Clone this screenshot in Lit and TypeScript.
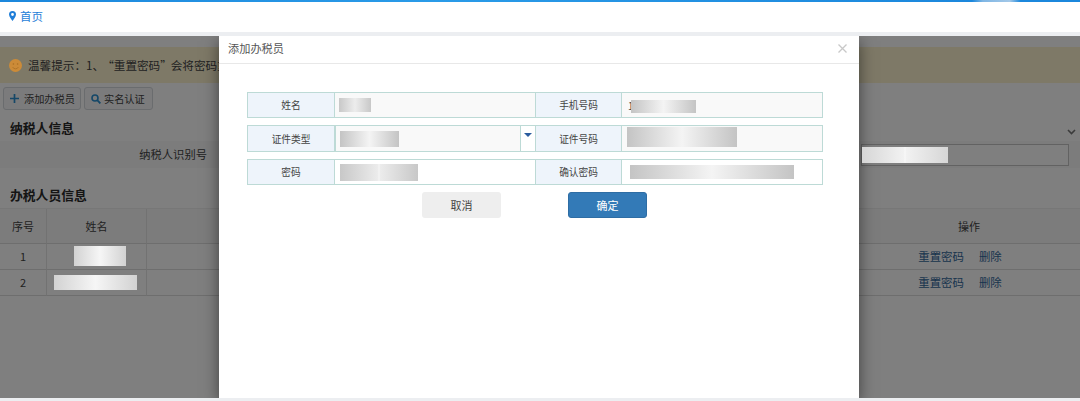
import { LitElement, html, css } from "lit";
import { customElement } from "lit/decorators.js";

@customElement("app-root")
export class AppRoot extends LitElement {
  static styles = css`
    :host { display: block; width: 1080px; height: 401px; overflow: hidden; background: #fff; color: #333; font-family: "Noto Sans CJK SC", "Noto Sans", sans-serif; }
    * { box-sizing: border-box; }
    .page { display: flex; flex-direction: column; height: 401px; }
    .topline { height: 2px; flex: none; background: linear-gradient(90deg, #1b87dc 0, #2a9be8 40%, #1b87dc 90%, #7fb6e4 91%, #a3c8e8 93.5%, #1b87dc 94.5%, #1b87dc 100%); }
    .nav { height: 30px; flex: none; display: flex; align-items: center; gap: 4px; padding: 0 0 2px 9px; background: #fff; color: #1f7ed8; font-size: 11.5px; }
    .nav svg { display: block; }
    .band { height: 4px; flex: none; background: #eceef1; }
    .foot { height: 3px; flex: none; background: #eceef1; }
    .main { position: relative; flex: 1; min-height: 0; overflow: hidden; background: #fff; }
    .content { display: flex; flex-direction: column; height: 100%; background: #fefefe; }
    .alert { margin-top: 11px; height: 36px; flex: none; display: flex; align-items: center; gap: 6px; padding-left: 9px; background: #fdf3cf; color: #444; font-size: 11.6px; white-space: nowrap; }
    .alert svg { flex: none; position: relative; z-index: 3; }
    .q { margin-left: 4px; }
    .q2 { margin-left: -1px; }
    .tools { display: flex; gap: 3px; padding: 4px 0 0 3px; }
    .tool { height: 23px; display: flex; align-items: center; gap: 5px; border: 1px solid #d4d8dc; border-radius: 3px; background: #f6f7f8; font-size: 10.2px; color: #444; padding: 0 5px; }
    .tool svg { flex: none; }
    .tool.add { width: 78px; padding-left: 6px; }
    .tool.real { width: 69px; padding-left: 6px; gap: 3px; }
    h2 { margin: 0; font-size: 12.8px; font-weight: 700; line-height: 18px; color: #2a2a2a; padding-left: 10px; }
    .h1 { margin-top: 9px; height: 22px; flex: none; position: relative; }
    .chev { position: absolute; right: 4px; top: 10px; }
    .tax { height: 27px; flex: none; display: flex; align-items: center; background: #f8f8f8; font-size: 11.3px; color: #444; }
    .tax .lab { width: 207px; text-align: right; flex: none; padding-bottom: 1px; }
    .tax .input { margin-left: 654px; width: 208px; height: 22px; border: 1px solid #c4c4c4; background: #fff; display: flex; align-items: center; padding-left: 0; }
    .h2 { margin-top: 18px; height: 22px; flex: none; }
    .grid { display: grid; grid-template-columns: 47px 100px 1fr 222px; font-size: 11px; color: #444; border-top: 1px solid #eee; }
    .cell { display: flex; align-items: center; justify-content: center; border-bottom: 1px solid #ddd; border-right: 1px solid #e5e5e5; height: 26px; padding-bottom: 1px; }
    .cell:nth-child(4n) { border-right: 0; }
    .hd { height: 35px; background: #f8f8f8; padding-bottom: 1px; }
    .ops { gap: 15px; color: #33689b; font-size: 11.4px; padding-right: 18px; }
    .overlay { position: absolute; inset: 0; z-index: 1; background: rgba(0, 0, 0, .5); }
    .modal { position: absolute; left: 219px; top: 0; bottom: 0; width: 640px; z-index: 2; background: #fff; box-shadow: 0 5px 15px rgba(0, 0, 0, .5); display: flex; flex-direction: column; }
    .mhead { height: 28px; flex: none; display: flex; align-items: center; justify-content: space-between; padding: 0 12px 3px 9px; border-bottom: 1px solid #e8e8e8; font-size: 11.2px; color: #555; }
    .form { margin: 28px 0 0 28px; width: 576px; display: grid; grid-template-columns: 88px 200px 87px 1fr; grid-template-rows: 26px 27px 26px; row-gap: 7px; font-size: 9.7px; color: #444; }
    .lab2, .val { border-top: 1px solid #bddad6; border-bottom: 1px solid #bddad6; height: 100%; display: flex; align-items: center; }
    .lab2 { justify-content: center; background: #eef4fb; border-left: 1px solid #bddad6; border-right: 1px solid #bddad6; }
    .val { background: #f9f9f9; }
    .val.w { background: #fff; }
    .val.end { border-right: 1px solid #bddad6; }
    .val.sel { border-left: 1px solid #bddad6; background: #fff; align-items: stretch; }
    .selbox { flex: 1; background: #f9f9f9; border-right: 1px solid #bddad6; display: flex; align-items: center; }
    .arrow { width: 14px; flex: none; display: flex; justify-content: center; padding-top: 7px; }
    .arrow i { display: block; width: 0; height: 0; border: 4px solid transparent; border-top: 4px solid #2b5c9e; }
    .one { margin-left: 6px; font-size: 10px; }
    .btns { display: flex; margin: 7px 0 0 203px; gap: 67px; }
    .btn { width: 79px; height: 26px; display: flex; align-items: center; justify-content: center; border-radius: 3px; font-size: 11px; padding-bottom: 1px; }
    .cancel { background: #eeeeee; color: #444; }
    .ok { background: #337ab7; color: #fff; border: 1px solid #2e6da4; }
    .r { display: block; flex: none; background: linear-gradient(90deg, #c4c4c4 0, #f4f4f4 50%, #c4c4c4 100%); }
    .seam { background: linear-gradient(90deg, #c8c8c8 0, #ececec 49%, #fafafa 50%, #ececec 51%, #c8c8c8 100%); }
    .bright { position: relative; z-index: 3; background: linear-gradient(90deg, #d2d2d2 0, #f6f6f6 50%, #d2d2d2 100%); }
    .bright.seam { background: linear-gradient(90deg, #d6d6d6 0, #f2f2f2 49%, #fbfbfb 50%, #f2f2f2 51%, #d6d6d6 100%); }
    .r1 { width: 32px; height: 14px; margin-left: 4px; }
    .r2 { width: 59px; height: 16px; margin-left: 4px; }
    .r3 { width: 78px; height: 17px; margin-left: 5px; }
    .r4 { width: 65px; height: 13px; margin-left: -3px; margin-top: 2px; }
    .r5 { width: 110px; height: 20px; margin-left: 5px; margin-top: -3px; }
    .r6 { width: 164px; height: 14px; margin-left: 8px; }
    .t1 { width: 52px; height: 20px; margin-left: 6px; }
    .t2 { width: 83px; height: 15px; margin-left: -2px; }
    .t3 { width: 86px; height: 16px; margin-left: 0; }
  `;

  render() {
    return html`
      <div class="page">
        <div class="topline"></div>
        <div class="nav">
          <svg width="7" height="10" viewBox="0 0 7 10"><path fill="#1f7ed8" fill-rule="evenodd" d="M3.5 0A3.5 3.5 0 0 0 0 3.5C0 5.8 2.6 8.6 3.5 10 4.4 8.6 7 5.8 7 3.5A3.5 3.5 0 0 0 3.5 0Zm0 2.1a1.4 1.4 0 1 1 0 2.8 1.4 1.4 0 0 1 0-2.8Z"/></svg>
          <span>首页</span>
        </div>
        <div class="band"></div>
        <div class="main">
          <div class="content">
            <div class="alert">
              <svg width="13" height="13" viewBox="0 0 13 13"><circle cx="6.5" cy="6.5" r="6.5" fill="#cc8b38"/><circle cx="4.4" cy="5" r=".8" fill="#a96f25"/><circle cx="8.6" cy="5" r=".8" fill="#a96f25"/><path d="M3.6 8a3.2 3.2 0 0 0 5.8 0" fill="none" stroke="#a96f25" stroke-width=".8"/></svg>
              <span>温馨提示：1、<span class="q">“重置密码”</span><span class="q2">会将密码重置为初始密码</span></span>
            </div>
            <div class="tools">
              <div class="tool add">
                <svg width="9" height="9" viewBox="0 0 9 9"><path d="M4.5 0v9M0 4.5h9" stroke="#2a8fd0" stroke-width="1.7"/></svg>
                <span>添加办税员</span>
              </div>
              <div class="tool real">
                <svg width="10" height="10" viewBox="0 0 10 10"><circle cx="4" cy="4" r="3" fill="none" stroke="#2a8fd0" stroke-width="1.6"/><path d="M6.2 6.2 9.4 9.4" stroke="#2a8fd0" stroke-width="1.8"/></svg>
                <span>实名认证</span>
              </div>
            </div>
            <div class="h1">
              <h2>纳税人信息</h2>
              <svg class="chev" width="9" height="6" viewBox="0 0 9 6"><path d="M1 1l3.5 3.5L8 1" fill="none" stroke="#777" stroke-width="1.6"/></svg>
            </div>
            <div class="tax">
              <span class="lab">纳税人识别号</span>
              <div class="input"><i class="r bright seam t3"></i></div>
            </div>
            <div class="h2"><h2>办税人员信息</h2></div>
            <div class="grid">
              <div class="cell hd">序号</div><div class="cell hd">姓名</div><div class="cell hd"></div><div class="cell hd">操作</div>
              <div class="cell">1</div><div class="cell"><i class="r bright t1"></i></div><div class="cell"></div>
              <div class="cell ops"><span>重置密码</span><span>删除</span></div>
              <div class="cell">2</div><div class="cell"><i class="r bright t2"></i></div><div class="cell"></div>
              <div class="cell ops"><span>重置密码</span><span>删除</span></div>
            </div>
          </div>
          <div class="overlay"></div>
          <div class="modal">
            <div class="mhead">
              <span>添加办税员</span>
              <svg width="9" height="9" viewBox="0 0 9 9"><path d="M.5.5l8 8M8.5.5l-8 8" stroke="#c8c8c8" stroke-width="1.3"/></svg>
            </div>
            <div class="form">
              <div class="lab2">姓名</div>
              <div class="val"><i class="r seam r1"></i></div>
              <div class="lab2">手机号码</div>
              <div class="val end"><span class="one">1</span><i class="r r4"></i></div>

              <div class="lab2">证件类型</div>
              <div class="val sel"><div class="selbox"><i class="r r2"></i></div><div class="arrow"><i></i></div></div>
              <div class="lab2">证件号码</div>
              <div class="val end"><i class="r r5"></i></div>

              <div class="lab2">密码</div>
              <div class="val w"><i class="r seam r3"></i></div>
              <div class="lab2">确认密码</div>
              <div class="val w end"><i class="r r6"></i></div>
            </div>
            <div class="btns">
              <div class="btn cancel">取消</div>
              <div class="btn ok">确定</div>
            </div>
          </div>
        </div>
        <div class="foot"></div>
      </div>
    `;
  }
}
